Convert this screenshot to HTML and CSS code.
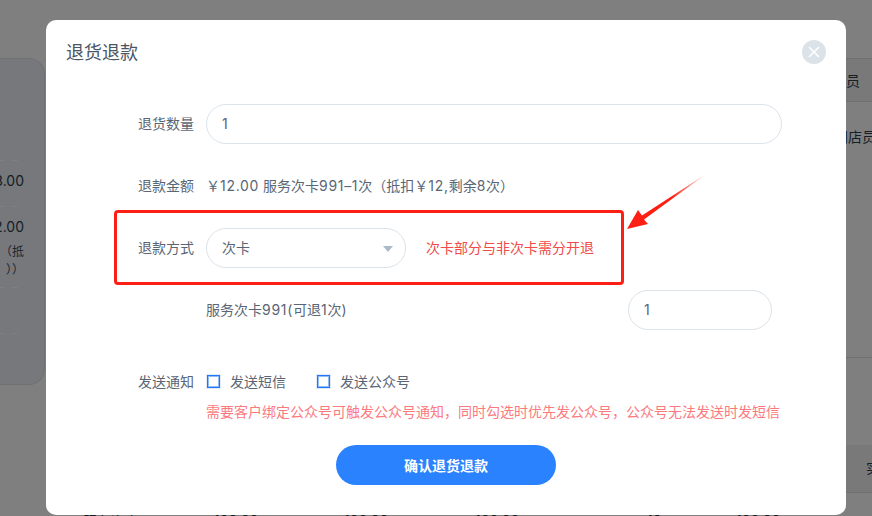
FILE: index.html
```html
<!DOCTYPE html>
<html lang="zh">
<head>
<meta charset="utf-8">
<title>退货退款</title>
<link rel="stylesheet" href="styles.css">
</head>
<body>
<div class="page">
  <aside class="card">
    <div class="dash"></div>
    <div class="amount first">8.00</div>
    <div class="dash d2"></div>
    <div class="amount second">2.00</div>
    <div class="note"><span>（抵</span><span>））</span></div>
    <div class="dash d3"></div>
    <div class="dash d4"></div>
  </aside>
  <section class="table">
    <div class="thead">员</div>
    <div class="trow">门店员</div>
    <div class="tband">实</div>
  </section>
</div>
<div class="peek">
  <span class="p1">服务次卡</span><span class="p2">100.00</span><span class="p3">100.00</span><span class="p4">100.00</span><span class="p5">10</span><span class="p6">100.00</span>
</div>
<div class="overlay"></div>
<div class="modal">
  <header class="modal-head">
    <h2 class="modal-title">退货退款</h2>
    <button class="close" aria-label="关闭">
      <svg width="14" height="14" viewBox="0 0 14 14"><path d="M2 2 L12 12 M12 2 L2 12" stroke="#fff" stroke-width="1.5" fill="none"/></svg>
    </button>
  </header>
  <form class="form">
    <div class="row">
      <label class="label">退货数量</label>
      <div class="field wide">1</div>
    </div>
    <div class="row">
      <label class="label">退款金额</label>
      <div class="value">￥<span class="num">12.00</span> 服务次卡<span class="num">991–1</span>次（抵扣￥<span class="num">12,</span>剩余<span class="num">8</span>次）</div>
    </div>
    <div class="row">
      <label class="label">退款方式</label>
      <div class="field select">次卡<span class="caret"></span></div>
      <div class="warn">次卡部分与非次卡需分开退</div>
    </div>
    <div class="row loose">
      <div class="label"></div>
      <div class="service">服务次卡<span class="num">991(</span>可退<span class="num">1</span>次<span class="num">)</span></div>
      <div class="field small">1</div>
    </div>
    <div class="row tight">
      <label class="label">发送通知</label>
      <div class="check first-check"><span class="box"></span>发送短信</div>
      <div class="check"><span class="box"></span>发送公众号</div>
    </div>
    <p class="hint">需要客户绑定公众号可触发公众号通知，同时勾选时优先发公众号，公众号无法发送时发短信</p>
    <div class="actions"><button type="button" class="submit">确认退货退款</button></div>
  </form>
</div>
<div class="mark"></div>
<svg class="arrow" width="90" height="64" viewBox="0 0 90 64">
  <defs>
    <linearGradient id="tail" x1="84" y1="1" x2="50" y2="25" gradientUnits="userSpaceOnUse">
      <stop offset="0" stop-color="#fe1f14" stop-opacity="0.15"/>
      <stop offset="1" stop-color="#fe1f14"/>
    </linearGradient>
  </defs>
  <path d="M83 0 L21 45.5 L25 50 L4 55 L15 36 L19 41.5 Z" fill="url(#tail)"/>
</svg>
</body>
</html>
```
FILE: styles.css
```css
* { box-sizing: border-box; }
html, body { margin: 0; height: 100%; overflow: hidden; }
body {
  width: 872px;
  height: 516px;
  position: relative;
  font-family: Inter, "Noto Sans CJK SC", "Noto Sans", sans-serif;
  font-size: 14px;
  color: #5a6675;
  background: #fff;
}
.page { display: flex; justify-content: space-between; height: 516px; padding-top: 58px; }
.card {
  width: 45px;
  height: 327px;
  background: #eef1f6;
  border: 1px solid #dde1e6;
  border-left: 0;
  border-radius: 0 16px 16px 0;
  color: #2c3e50;
  padding: 101px 0 0 0;
}
.dash {
  width: 18px;
  height: 1px;
  background: repeating-linear-gradient(to left, #fdfdfd 0 7px, transparent 7px 13px);
}
.amount { display: flex; justify-content: flex-end; line-height: 20px; padding-right: 20px; white-space: nowrap; }
.amount.first { margin-top: 10px; }
.dash.d2 { margin-top: 15px; }
.amount.second { margin-top: 10px; }
.note { display: flex; flex-direction: column; align-items: flex-end; font-size: 12px; line-height: 18px; padding-right: 20px; margin-top: 6px; white-space: nowrap; color: #3d4c5c; }
.dash.d3 { margin-top: 8px; }
.dash.d4 { margin-top: 45px; }
.table { width: 26px; color: #2c3e50; white-space: nowrap; }
.thead {
  height: 44px;
  line-height: 43px;
  background: #f2f3f5;
  border-top: 1px solid #e0e0e0;
  border-bottom: 1px solid #e0e0e0;
}
.trow {
  height: 256px;
  line-height: 70px;
  margin-left: -12px;
  border-bottom: 1px solid #e0e0e0;
}
.tband {
  margin-top: 87px;
  height: 48px;
  line-height: 46px;
  padding-left: 20px;
  background: #f2f3f5;
  border-bottom: 1px solid #e0e0e0;
}
.peek {
  position: absolute;
  left: 0;
  top: 512px;
  width: 872px;
  display: flex;
  line-height: 18px;
  color: #1f2d3d;
  white-space: nowrap;
}
.peek span { flex: none; }
.p1 { width: 131px; margin-left: 83px; }
.p2 { width: 130px; }
.p3 { width: 131px; }
.p4 { width: 172px; }
.p5 { width: 89px; }
.overlay { position: absolute; inset: 0; background: rgba(0, 0, 0, 0.5); }
.modal {
  position: absolute;
  left: 46px;
  top: 20px;
  width: 800px;
  height: 495px;
  background: #fff;
  border-radius: 10px;
}
.modal-head {
  display: flex;
  justify-content: space-between;
  align-items: center;
  height: 64px;
  padding: 0 20px;
  margin-bottom: 20px;
}
.modal-title { margin: 0; padding-bottom: 2px; font-size: 18px; font-weight: 400; color: #4a5666; }
.close {
  width: 24px;
  height: 24px;
  padding: 0;
  border: 0;
  border-radius: 50%;
  background: #dbe2e8;
  display: flex;
  align-items: center;
  justify-content: center;
}
.row { display: flex; align-items: center; height: 40px; margin-bottom: 22px; }
.row.loose { margin-bottom: 32px; }
.row.tight { margin-bottom: 0; }
.label, .value, .warn, .service, .check { padding-bottom: 2px; }
.num { letter-spacing: 0.7px; }
.label { width: 148px; margin-right: 12px; text-align: right; flex: none; }
.field {
  height: 40px;
  line-height: 38px;
  border: 1px solid #dce3eb;
  border-radius: 20px;
  padding-left: 15px;
  background: #fff;
}
.field.wide { width: 576px; }
.field.select { width: 200px; position: relative; }
.caret {
  position: absolute;
  right: 12px;
  top: 17px;
  border-left: 5px solid transparent;
  border-right: 5px solid transparent;
  border-top: 6px solid #a9bacb;
}
.warn { margin-left: 20px; color: #f04a4a; }
.service { width: 422px; }
.field.small { width: 144px; }
.check { display: flex; align-items: center; }
.first-check { width: 110px; margin-left: 1px; }
.box {
  width: 13px;
  height: 13px;
  border: 1px solid #1f78ff;
  box-shadow: 0 0 0 1px #e3e9f2, inset 0 0 0 1px #8fbcff;
  margin-right: 10px;
  background: #fff;
}
.hint { margin: 0 0 0 160px; line-height: 20px; color: #fb7a80; white-space: nowrap; }
.actions { display: flex; justify-content: center; margin-top: 23px; }
.submit {
  width: 220px;
  height: 40px;
  border: 0;
  border-radius: 20px;
  background: #2a82ff;
  color: #fff;
  font-family: inherit;
  font-size: 14px;
  font-weight: 700;
}
.mark {
  position: absolute;
  left: 114px;
  top: 210px;
  width: 510px;
  height: 75px;
  border: 3px solid #fe1f14;
  border-radius: 4px;
}
.arrow { position: absolute; left: 623px; top: 174px; }
```
